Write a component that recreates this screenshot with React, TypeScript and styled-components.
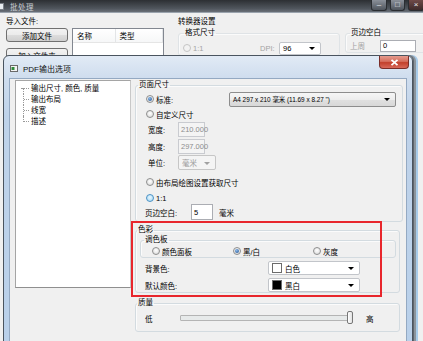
import styled, { createGlobalStyle, css } from "styled-components";

const GlobalStyle = createGlobalStyle`
	html, body {
		margin: 0;
		padding: 0;
		background: #f0f0f0;
	}
	body {
		font-family: "Liberation Sans", "Noto Sans CJK SC", sans-serif;
		font-size: 7.5px;
		color: #000;
	}
	* {
		box-sizing: border-box;
	}
`;

const App = () => {
	return (
		<>
			<GlobalStyle />
			<Screen>
				<MainTitleBar>
					<MainIcon />
					<MainTitle>批处理</MainTitle>
					<WinButtons>
						<WinButton $w={16}>–</WinButton>
						<WinButton $w={15}>□</WinButton>
						<WinButton $w={16} $close>×</WinButton>
					</WinButtons>
				</MainTitleBar>
				<MainBody>
					<ImportPanel>
						<PanelLabel>导入文件:</PanelLabel>
						<ImportRow>
							<ButtonCol>
								<PushButton>添加文件</PushButton>
								<PushButton>加入文件夹</PushButton>
							</ButtonCol>
							<FileList>
								<ListHeader>
									<HeaderCell $w={43}>名称</HeaderCell>
									<HeaderCell $w={48}>类型</HeaderCell>
								</ListHeader>
							</FileList>
						</ImportRow>
					</ImportPanel>
					<ConverterPanel>
						<PanelLabel>转换器设置</PanelLabel>
						<Group $w={162} $faint>
							<Legend $indent={5}>格式尺寸</Legend>
							<Row $h={14} $mt={3} $pl={4}>
								<Option $w={77}>
									<Radio $disabled />
									<Grey>1:1</Grey>
								</Option>
								<Grey $w={19}>DPI:</Grey>
								<Combo $w={42} $h={13} $variant="field">
									96
								</Combo>
							</Row>
						</Group>
					</ConverterPanel>
					<MarginPanel>
						<PanelLabel>&nbsp;</PanelLabel>
						<Group $w={90} $faint>
							<Legend $indent={4}>页边空白</Legend>
							<Row $h={13} $mt={1} $pl={4}>
								<Grey $w={30}>上周</Grey>
								<TextBox $w={36} $h={12}>
									0
								</TextBox>
							</Row>
						</Group>
					</MarginPanel>
				</MainBody>

				<Dialog>
					<DialogTitleBar>
						<DialogIcon>
							<svg width="8" height="7" viewBox="0 0 8 7">
								<rect x="0.5" y="0.5" width="7" height="6" fill="#f4f4f4" stroke="#6a6a6a" />
								<rect x="1.5" y="2" width="3" height="3" fill="#2f8a3c" />
							</svg>
						</DialogIcon>
						<DialogTitle>PDF输出选项</DialogTitle>
						<CloseButton>
							<svg width="9" height="7" viewBox="0 0 9 7">
								<path d="M1.5 0.8 L7.5 6.2 M7.5 0.8 L1.5 6.2" stroke="#fff" strokeWidth="1.8" />
							</svg>
						</CloseButton>
					</DialogTitleBar>
					<DialogContent>
						<Tree>
							<TreeItem $pos="first">输出尺寸, 颜色, 质量</TreeItem>
							<TreeItem $pos="mid">输出布局</TreeItem>
							<TreeItem $pos="mid">线宽</TreeItem>
							<TreeItem $pos="last">描述</TreeItem>
						</Tree>
						<Settings>
							<Group $w={268}>
								<Legend $indent={2}>页面尺寸</Legend>
								<Row $h={16} $mt={1} $pl={10}>
									<Option $w={83}>
										<Radio $checked />
										<span>标准:</span>
									</Option>
									<Combo $w={167} $h={15} $variant="button" $fs={6.4}>
										A4 297 x 210 毫米 (11.69 x 8.27 ")
									</Combo>
								</Row>
								<Row $h={14} $pl={10}>
									<Option>
										<Radio />
										<span>自定义尺寸</span>
									</Option>
								</Row>
								<Row $h={16} $pl={12}>
									<FieldLabel $w={30}>宽度:</FieldLabel>
									<TextBox $w={27} $h={15} $disabled>
										210.000
									</TextBox>
								</Row>
								<Row $h={15} $mt={2} $pl={12}>
									<FieldLabel $w={30}>高度:</FieldLabel>
									<TextBox $w={27} $h={15} $disabled>
										297.000
									</TextBox>
								</Row>
								<Row $h={15} $mt={1} $pl={12}>
									<FieldLabel $w={30}>单位:</FieldLabel>
									<Combo $w={38} $h={15} $variant="disabled">
										毫米
									</Combo>
								</Row>
								<Row $h={14} $mt={5} $pl={10}>
									<Option>
										<Radio />
										<span>由布局绘图设置获取尺寸</span>
									</Option>
								</Row>
								<Row $h={14} $mt={2} $pl={10}>
									<Option>
										<Radio $hot />
										<span>1:1</span>
									</Option>
								</Row>
								<Row $h={16} $mt={-1} $pl={9} $pb={1}>
									<FieldLabel $w={46}>页边空白:</FieldLabel>
									<TextBox $w={22} $h={16}>
										5
									</TextBox>
									<Unit>毫米</Unit>
								</Row>
							</Group>

							<Group $w={265} $mt={3}>
								<Legend $indent={1}>色彩</Legend>
								<Group $w={256} $ml={4}>
									<Legend $indent={3}>调色板</Legend>
									<Row $h={12} $pl={11}>
										<Option $w={81}>
											<Radio />
											<span>颜色面板</span>
										</Option>
										<Option $w={80}>
											<Radio $checked />
											<span>黑/白</span>
										</Option>
										<Option>
											<Radio />
											<span>灰度</span>
										</Option>
									</Row>
								</Group>
								<Row $h={14} $mt={3} $pl={9}>
									<FieldLabel $w={123}>背景色:</FieldLabel>
									<Combo $w={92} $h={14} $variant="field">
										<Swatch $color="#ffffff" />
										白色
									</Combo>
								</Row>
								<Row $h={14} $mt={3} $pl={9}>
									<FieldLabel $w={123}>默认颜色:</FieldLabel>
									<Combo $w={92} $h={14} $variant="field">
										<Swatch $color="#000000" />
										黑白
									</Combo>
								</Row>
							</Group>

							<Group $w={265} $mt={5}>
								<Legend $indent={1}>质量</Legend>
								<Row $h={16} $mt={2} $pl={9} $pb={5}>
									<FieldLabel $w={35}>低</FieldLabel>
									<Track>
										<Thumb />
									</Track>
									<Unit $ml={14}>高</Unit>
								</Row>
							</Group>
						</Settings>
					</DialogContent>
				</Dialog>

				<Highlight />
			</Screen>
		</>
	);
};

const Screen = styled.div`
	position: relative;
	width: 423px;
	height: 341px;
	overflow: hidden;
	background: #f0f0f0;
`;

/* ---------- background window ---------- */

const MainTitleBar = styled.div`
	height: 13px;
	display: flex;
	align-items: center;
	background: linear-gradient(#2c2f33, #4f555c 70%, #6a7078);
	border-bottom: 1px solid #9aa3ad;
`;

const MainIcon = styled.div`
	width: 4px;
	height: 7px;
	background: #e8ecef;
	border: 1px solid #7b8087;
	border-left: 0;
`;

const MainTitle = styled.div`
	margin-left: 6px;
	color: #c9ced4;
	font-size: 7.5px;
	letter-spacing: 0.5px;
`;

const WinButtons = styled.div`
	margin-left: auto;
	align-self: flex-start;
	display: flex;
	gap: 3px;
	margin-right: -1px;
`;

const WinButton = styled.div<{ $w: number; $close?: boolean }>`
	width: ${(p) => p.$w}px;
	height: 11px;
	display: flex;
	align-items: center;
	justify-content: center;
	font-size: 8px;
	line-height: 1;
	color: #e9edf2;
	border: 1px solid #2a2d31;
	border-top: 0;
	border-radius: 0 0 3px 3px;
	background: ${(p) =>
		p.$close ? "linear-gradient(#6f4a48, #3d2b2b)" : "linear-gradient(#8a9099, #4f555d)"};
`;

const MainBody = styled.div`
	display: flex;
	padding: 4px 0 0 6px;
`;

const PanelLabel = styled.div`
	height: 10px;
	line-height: 10px;
	margin-bottom: 1px;
`;

const ImportPanel = styled.div`
	width: 158px;
	display: flex;
	flex-direction: column;
`;

const ImportRow = styled.div`
	display: flex;
	gap: 4px;
`;

const ButtonCol = styled.div`
	width: 62px;
	display: flex;
	flex-direction: column;
	gap: 6px;
`;

const PushButton = styled.div`
	height: 14px;
	display: flex;
	align-items: center;
	justify-content: center;
	border: 1px solid #707070;
	border-radius: 3px;
	background: linear-gradient(#f2f2f2 0, #ebebeb 50%, #dddddd 51%, #cfcfcf 100%);
`;

const FileList = styled.div`
	width: 92px;
	height: 120px;
	background: #fff;
	border: 1px solid #828790;
`;

const ListHeader = styled.div`
	height: 14px;
	display: flex;
	border-bottom: 1px solid #e5e5e5;
	background: linear-gradient(#ffffff, #f6f7f8);
`;

const HeaderCell = styled.div<{ $w: number }>`
	width: ${(p) => p.$w}px;
	padding-left: 4px;
	display: flex;
	align-items: center;
	border-right: 1px solid #e3e5e7;
`;

const ConverterPanel = styled.div`
	margin-left: 14px;
	display: flex;
	flex-direction: column;
`;

const MarginPanel = styled.div`
	margin-left: 5px;
	display: flex;
	flex-direction: column;
`;

const Grey = styled.span<{ $w?: number }>`
	color: #a3a3a3;
	${(p) => p.$w && `width: ${p.$w}px; flex: none;`}
`;

/* ---------- shared controls ---------- */

const Group = styled.fieldset<{ $w: number; $mt?: number; $ml?: number; $faint?: boolean }>`
	width: ${(p) => p.$w}px;
	margin: ${(p) => p.$mt ?? 0}px 0 0 ${(p) => p.$ml ?? 0}px;
	padding: 0;
	min-width: 0;
	border: 1px solid ${(p) => (p.$faint ? "#dfe3e6" : "#d3dbe0")};
	border-radius: 3px;
	box-shadow: inset 1px 1px 0 #fbfbfb;
`;

const Legend = styled.legend<{ $indent: number }>`
	margin-left: ${(p) => p.$indent}px;
	padding: 0 1px;
	height: 10px;
	line-height: 10px;
	font-size: 7.5px;
`;

const Row = styled.div<{ $h: number; $mt?: number; $pl?: number; $pb?: number }>`
	height: ${(p) => p.$h + (p.$pb ?? 0)}px;
	margin-top: ${(p) => p.$mt ?? 0}px;
	padding-left: ${(p) => p.$pl ?? 0}px;
	padding-bottom: ${(p) => p.$pb ?? 0}px;
	display: flex;
	align-items: center;
	white-space: nowrap;
`;

const Option = styled.div<{ $w?: number }>`
	display: flex;
	align-items: center;
	gap: 2px;
	${(p) => p.$w && `width: ${p.$w}px; flex: none;`}
`;

const Radio = styled.span<{ $checked?: boolean; $hot?: boolean; $disabled?: boolean }>`
	position: relative;
	flex: none;
	width: 8px;
	height: 8px;
	border-radius: 50%;
	border: 1px solid ${(p) => (p.$hot ? "#4c92c4" : p.$disabled ? "#c4c4c4" : "#8e8f8f")};
	background: ${(p) =>
		p.$hot
			? "radial-gradient(circle at 50% 40%, #eaf7fe, #9fd6f4)"
			: p.$disabled
			? "#f2f2f2"
			: "radial-gradient(circle at 50% 40%, #ffffff, #d6d6d6)"};
	${(p) =>
		p.$checked &&
		css`
			&::after {
				content: "";
				position: absolute;
				left: 1px;
				top: 1px;
				width: 4px;
				height: 4px;
				border-radius: 50%;
				background: radial-gradient(circle at 40% 35%, #8ab9ea, #1d4d8c);
			}
		`}
`;

const FieldLabel = styled.span<{ $w: number }>`
	width: ${(p) => p.$w}px;
	flex: none;
`;

const Unit = styled.span<{ $ml?: number }>`
	margin-left: ${(p) => p.$ml ?? 6}px;
`;

const TextBox = styled.div<{ $w: number; $h: number; $disabled?: boolean }>`
	width: ${(p) => p.$w}px;
	height: ${(p) => p.$h}px;
	flex: none;
	display: flex;
	align-items: center;
	padding-left: 2px;
	border: 1px solid ${(p) => (p.$disabled ? "#c9cbd0" : "#abadb3")};
	background: ${(p) => (p.$disabled ? "#f4f4f4" : "#ffffff")};
	color: ${(p) => (p.$disabled ? "#8d8d8d" : "#000")};
`;

const comboLook = {
	button: css`
		border-color: #8d8d8d;
		background: linear-gradient(#f6f6f6 0, #ededed 50%, #e0e0e0 51%, #d8d8d8 100%);
	`,
	field: css`
		border-color: #c2c5ca;
		background: #ffffff;
	`,
	disabled: css`
		border-color: #c6c6c6;
		background: #f4f4f4;
		color: #9a9a9a;
		&::after {
			border-top-color: #a0a0a0;
		}
	`,
};

const Combo = styled.div<{ $w: number; $h: number; $variant: keyof typeof comboLook; $fs?: number }>`
	position: relative;
	flex: none;
	width: ${(p) => p.$w}px;
	height: ${(p) => p.$h}px;
	display: flex;
	align-items: center;
	gap: 3px;
	padding: 0 12px 0 3px;
	border: 1px solid;
	border-radius: 2px;
	overflow: hidden;
	font-size: ${(p) => p.$fs ?? 7.5}px;
	&::after {
		content: "";
		position: absolute;
		right: 5px;
		top: 50%;
		margin-top: -1px;
		border-left: 3px solid transparent;
		border-right: 3px solid transparent;
		border-top: 3px solid #000;
	}
	${(p) => comboLook[p.$variant]}
`;

const Swatch = styled.span<{ $color: string }>`
	width: 10px;
	height: 10px;
	flex: none;
	background: ${(p) => p.$color};
	border: 1px solid #6b6b6b;
`;

const Track = styled.div`
	position: relative;
	width: 172px;
	height: 6px;
	flex: none;
	border: 1px solid #b4b4b4;
	border-radius: 1px;
	background: #e7eaea;
`;

const Thumb = styled.div`
	position: absolute;
	right: -2px;
	top: -5px;
	width: 6px;
	height: 13px;
	border: 1px solid #777;
	border-radius: 2px;
	background: linear-gradient(90deg, #ffffff, #e2e2e2);
`;

/* ---------- dialog ---------- */

const Dialog = styled.div`
	position: absolute;
	left: 3px;
	top: 55px;
	width: 410px;
	height: 300px;
	display: flex;
	flex-direction: column;
	border: 1px solid #4a545f;
	border-radius: 6px 6px 0 0;
	background: linear-gradient(#e1eaf5 0, #cfddee 22px, #bfd3ea 60px, #b9d0ea 100%);
	box-shadow: 1px 0 0 #5e656d, 3px 0 0 #8b949c, 5px 0 0 #a8cbe9;
`;

const DialogTitleBar = styled.div`
	height: 22px;
	display: flex;
	align-items: center;
	padding-left: 6px;
`;

const DialogIcon = styled.div`
	display: flex;
	margin-top: 2px;
`;

const DialogTitle = styled.div`
	margin-left: 5px;
	margin-top: 2px;
	font-size: 8px;
	color: #111;
`;

const CloseButton = styled.div`
	margin-left: auto;
	margin-right: 3px;
	align-self: flex-start;
	width: 30px;
	height: 13px;
	display: flex;
	align-items: center;
	justify-content: center;
	border: 1px solid #7a2d28;
	border-top: 0;
	border-radius: 0 0 4px 4px;
	background: linear-gradient(#e59b8e 0, #d56e5d 45%, #c2402c 55%, #d8695a 100%);
`;

const DialogContent = styled.div`
	flex: 1;
	display: flex;
	align-items: flex-start;
	gap: 4px;
	margin: 0 5px;
	padding: 1px 0 0 5px;
	border: 1px solid #94a9c2;
	background: #f0f0f0;
`;

const Tree = styled.div`
	width: 116px;
	height: 208px;
	flex: none;
	padding-top: 2px;
	background: #fff;
	border: 1px solid #a5a5a5;
	border-right-color: #c8c8c8;
	border-bottom-color: #8f8f8f;
`;

const TreeItem = styled.div<{ $pos: "first" | "mid" | "last" }>`
	position: relative;
	height: 11px;
	line-height: 11px;
	padding-left: 15px;
	white-space: nowrap;
	&::before {
		content: "";
		position: absolute;
		left: 7px;
		top: ${(p) => (p.$pos === "first" ? "5px" : "0")};
		height: ${(p) => (p.$pos === "mid" ? "11px" : "6px")};
		border-left: 1px dotted #9a9a9a;
	}
	&::after {
		content: "";
		position: absolute;
		left: ${(p) => (p.$pos === "first" ? "5px" : "8px")};
		top: 5px;
		width: ${(p) => (p.$pos === "first" ? "8px" : "5px")};
		border-top: 1px dotted #9a9a9a;
	}
`;

const Settings = styled.div`
	display: flex;
	flex-direction: column;
`;

/* annotation drawn over the screenshot */
const Highlight = styled.div`
	position: absolute;
	left: 131px;
	top: 221px;
	width: 251px;
	height: 76px;
	border: 2px solid #e8262c;
	pointer-events: none;
`;

export default App;
